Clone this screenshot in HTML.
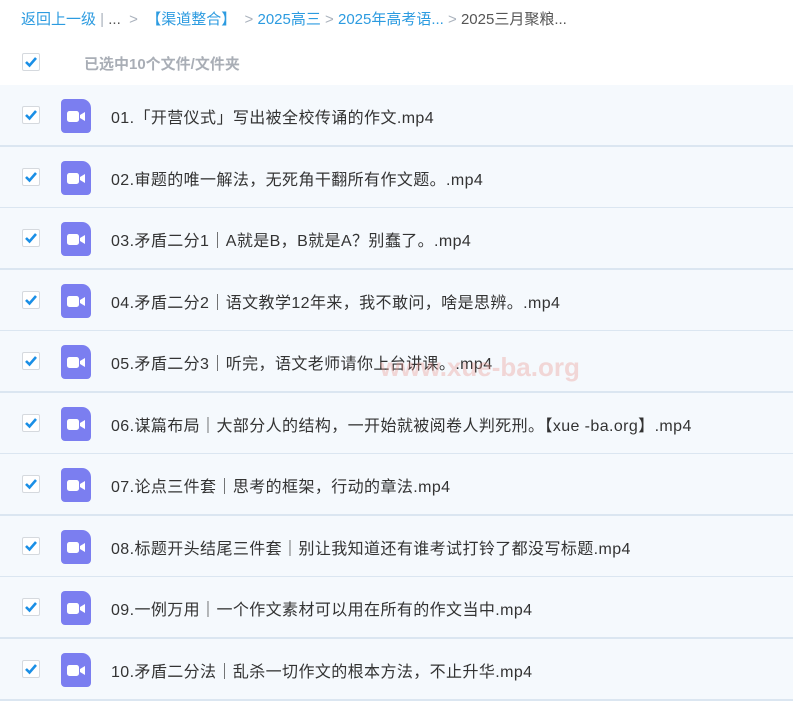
<html><head><style>
body{margin:0;width:793px;height:697px;overflow:hidden;background:#fff;font-family:"Liberation Sans","Noto Sans CJK SC",sans-serif;position:relative}
.bc{position:absolute;top:8px;left:21px;font-size:15px;color:#2c9be0;white-space:nowrap}
.bc .g{color:#aab2bd}.bc .d{color:#555}
.cb{position:absolute;width:16px;height:16px;border:1px solid #d5d9de;background:#fff;border-radius:2px}
.cb svg{position:absolute;left:1px;top:1px}
.sel{position:absolute;top:53px;left:84px;font-size:15px;font-weight:bold;color:#a9aeb6}
.row{position:absolute;left:0;width:793px;height:60px;background:#f5f9fd;border-bottom:2px solid #dbe6f1}
.row .cb{left:22px;top:21px}
.ic{position:absolute;left:61px;top:14px;width:30px;height:34px;background:#7b7ef0;border-radius:4px 9px 4px 4px}
.ic svg{position:absolute;left:6px;top:11px}
.t{position:absolute;left:111px;top:19px;font-size:16px;color:#333;white-space:nowrap;letter-spacing:0.4px}
.wm{position:absolute;left:380px;top:352px;font-size:26px;font-weight:bold;color:rgba(235,150,140,.35);font-family:"Liberation Sans",sans-serif}
</style></head><body>
<div class="bc">返回上一级 <span class="g">|</span> <span class="d">...</span> <span class="g">&nbsp;&gt;&nbsp;</span> 【渠道整合】 <span class="g">&nbsp;&gt;</span> 2025高三 <span class="g">&gt;</span> 2025年高考语... <span class="g">&gt;</span> <span class="d">2025三月聚粮...</span></div>
<div class="cb" style="left:22px;top:53px"><svg width="14" height="14" viewBox="0 0 14 14"><path d="M2 7l3.5 3.5L12 3" stroke="#1a8fe6" stroke-width="2.6" fill="none"/></svg></div>
<div class="sel">已选中10个文件/文件夹</div>
<div id="rows"></div>
<div class="wm">www.xue-ba.org</div>
<script>
var t=["01.「开营仪式」写出被全校传诵的作文.mp4","02.审题的唯一解法，无死角干翻所有作文题。.mp4","03.矛盾二分1｜A就是B，B就是A？别蠢了。.mp4","04.矛盾二分2｜语文教学12年来，我不敢问，啥是思辨。.mp4","05.矛盾二分3｜听完，语文老师请你上台讲课。.mp4","06.谋篇布局｜大部分人的结构，一开始就被阅卷人判死刑。【xue -ba.org】.mp4","07.论点三件套｜思考的框架，行动的章法.mp4","08.标题开头结尾三件套｜别让我知道还有谁考试打铃了都没写标题.mp4","09.一例万用｜一个作文素材可以用在所有的作文当中.mp4","10.矛盾二分法｜乱杀一切作文的根本方法，不止升华.mp4"];
var h="";for(var i=0;i<10;i++){h+='<div class="row" style="top:'+Math.round(85+i*61.5)+'px"><div class="cb"><svg width="14" height="14" viewBox="0 0 14 14"><path d="M2 7l3.5 3.5L12 3" stroke="#1a8fe6" stroke-width="2.6" fill="none"/></svg></div><div class="ic"><svg width="19" height="13" viewBox="0 0 19 13"><rect x="0" y="1" width="12" height="11" rx="2.5" fill="#fff"/><path d="M13 5l5-3v9l-5-3z" fill="#fff"/></svg></div><div class="t">'+t[i]+'</div></div>';}
document.getElementById("rows").innerHTML=h;
</script>
</body></html>
